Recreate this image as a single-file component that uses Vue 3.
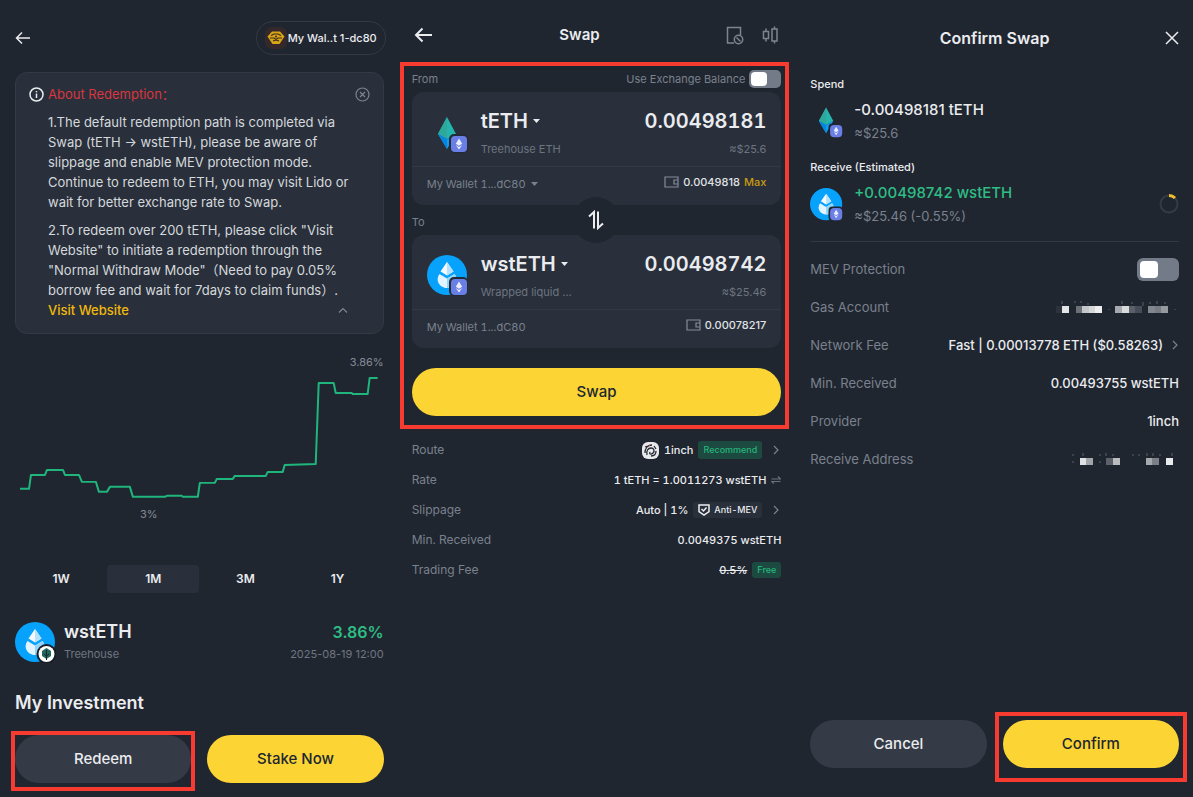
<script setup>
import { ref } from 'vue'

const ranges = ['1W', '1M', '3M', '1Y']
const range = ref('1M')
const amount = ref('0.00498181')
const useExchange = ref(false)
const mev = ref(false)

const trend =
  '5,137 14,137 16,123 30,123 32,118 48,118 50,123 64,123 67,130 81,130 84,140 92,140 95,135 115,135 118,145 150,145 152,144 167,144 168,145 183,145 185,131 200,131 202,127 218,127 220,124 251,124 253,120 268,120 270,113 301,112 304,31 319,31 321,41 337,41 338,42 353,42 355,26 363,26'

const gasMask = [
  [1, '#2c323c'], [7, '#e4e5e7'], [21, '#6c7178'], [27, '#c4c6c9'], [34, '#d6d7d9'], [40, '#eeeeef'],
  [60, '#a6a9ae'], [67, '#d9dadc'], [74, '#5a5f68'], [80, '#474d57'], [93, '#82868d'], [100, '#777c84'], [106, '#969a9f'],
]
const addressMask = [
  [25, '#e0e1e3'], [31, '#a1a4a9'], [51, '#5c616a'], [58, '#babcc0'], [91, '#a6a9ae'], [97, '#7b7f87'], [111, '#e9eaeb'],
]
</script>

<template>
  <main class="screens">
    <section class="screen detail">
      <header class="bar">
        <button class="icon-btn" aria-label="Back">
          <svg width="16" height="14" viewBox="0 0 16 14"><path d="M15 7H1.500M7 1.500L1.500 7L7 12.500" class="stroke" /></svg>
        </button>
        <button class="wallet">
          <svg width="22" height="22" viewBox="0 0 22 22">
            <rect width="22" height="22" rx="7" fill="#35282b" />
            <path d="M7 4.500h8l4.500 5-5 7.500H7.500l-5-7.500z" fill="#d9a514" />
            <path d="M6 8.500l3-1.500h4l3 1.500M5 11h4l2 1.500L13 11h4M8 14l3-1 3 1" fill="none" stroke="#3c2b20" stroke-width="1.200" />
            <circle cx="11" cy="9.500" r="1" fill="#3c2b20" />
          </svg>
          My Wal..t 1-dc80
        </button>
      </header>

      <article class="notice">
        <svg class="info" width="15" height="15" viewBox="0 0 15 15"><circle cx="7.500" cy="7.500" r="6.500" class="stroke" /><path d="M7.500 6.500v4.500M7.500 4v1.300" class="stroke" /></svg>
        <h2>About Redemption：</h2>
        <button class="icon-btn muted" aria-label="Dismiss">
          <svg width="15" height="15" viewBox="0 0 15 15"><circle cx="7.500" cy="7.500" r="6.500" class="stroke thin" /><path d="M5 5l5 5M10 5l-5 5" class="stroke thin" /></svg>
        </button>
        <div class="notice-text">
          <p>1.The default redemption path is completed via<br />Swap (tETH → wstETH), please be aware of<br />slippage and enable MEV protection mode.<br />Continue to redeem to ETH, you may visit Lido or<br />wait for better exchange rate to Swap.</p>
          <p>2.To redeem over 200 tETH, please click "Visit<br />Website" to initiate a redemption through the<br />"Normal Withdraw Mode"（Need to pay 0.05%<br />borrow fee and wait for 7days to claim funds）.</p>
          <div class="notice-end">
            <a href="#">Visit Website</a>
            <button class="icon-btn muted" aria-label="Collapse">
              <svg width="10" height="6" viewBox="0 0 10 6"><path d="M1 5.500L5 1.500L9 5.500" class="stroke thin" /></svg>
            </button>
          </div>
        </div>
      </article>

      <svg class="chart" viewBox="0 0 369 180" role="img" aria-label="APR trend">
        <polyline :points="trend" fill="none" stroke="#1fb57c" stroke-width="2" stroke-linejoin="round" />
        <text x="369" y="14" text-anchor="end">3.86%</text>
        <text x="134" y="166" text-anchor="middle">3%</text>
      </svg>

      <nav class="tabs">
        <button v-for="r in ranges" :key="r" :class="{ active: r === range }" @click="range = r">{{ r }}</button>
      </nav>

      <div class="asset">
        <svg width="41" height="41" viewBox="0 0 41 41">
          <circle cx="20" cy="20" r="20" fill="#06a2fb" />
          <path d="M20 7l6.500 9.500-6.500 4-6.500-4z" fill="#f3faff" /><path d="M20 7l6.500 9.500-6.500 4z" fill="#b5e1fd" />
          <path d="M12.500 19l7.500 4.500 7.500-4.500c5 7-1 14-7.500 14s-12.500-7-7.500-14z" fill="#e2f4ff" />
          <path d="M20 23.500l7.500-4.500c5 7-1 14-7.500 14z" fill="#91d4fd" />
          <circle cx="31.500" cy="32" r="10" fill="#181d25" /><circle cx="31.500" cy="32" r="8" fill="#fff" />
          <path d="M31.500 26l4.500 3v5l-4.500 3-4.500-3v-5z" fill="#22665c" /><path d="M31.500 28v10M29 32l2.500 2 2.500-2" stroke="#152a30" fill="none" />
        </svg>
        <div class="asset-name"><strong>wstETH</strong><span>Treehouse</span></div>
        <div class="asset-rate"><strong>3.86%</strong><span>2025-08-19 12:00</span></div>
      </div>

      <h2 class="title">My Investment</h2>
      <div class="actions">
        <div class="marked tight"><button class="pill grey">Redeem</button></div>
        <button class="pill">Stake Now</button>
      </div>
    </section>

    <section class="screen swap">
      <header class="bar">
        <button class="icon-btn" aria-label="Back">
          <svg width="19" height="16" viewBox="0 0 19 16"><path d="M18 8H2M8.500 1.500L2 8L8.500 14.500" class="stroke bold" /></svg>
        </button>
        <h1>Swap</h1>
        <div class="tools">
          <button class="icon-btn muted" aria-label="Orders">
            <svg width="18" height="19" viewBox="0 0 18 19"><path d="M8 17H1.500V1.500H14.500V9" class="stroke" /><circle cx="12.500" cy="13.500" r="4.200" class="stroke" /><path d="M10.500 11.500l4 4" class="stroke" /></svg>
          </button>
          <button class="icon-btn muted" aria-label="Chart">
            <svg width="17" height="18" viewBox="0 0 17 18"><path d="M4 2.500v3M4 12.500v3M1.500 5.500h5v7h-5zM12.500 0.500v2.500M12.500 15v2.500M10 3h5v12H10z" class="stroke" /></svg>
          </button>
        </div>
      </header>

      <div class="frame">
        <div class="line">
          <label for="from">From</label>
          <label class="exchange">Use Exchange Balance <input v-model="useExchange" type="checkbox" class="switch" /></label>
        </div>
        <div class="token-card">
          <div class="token-main">
            <svg class="coin" width="41" height="41" viewBox="0 0 41 41">
              <path d="M20 5l9 17-9 5-9-5z" fill="#26b5ae" /><path d="M20 5v22l-9-5z" fill="#2fa89c" />
              <path d="M11 22l9 5 9-5-9 15z" fill="#0e9cf0" /><path d="M11 22l9 5v10z" fill="#0784dc" />
              <rect x="22" y="22" width="19" height="19" rx="5" fill="#242b35" /><rect x="24" y="24" width="16" height="16" rx="4" fill="#6a7fe5" />
              <path d="M32 26.500l3.200 5.300-3.200 2-3.200-2zM28.800 33l3.200 2 3.200-2-3.200 4.500z" fill="#e9edff" />
            </svg>
            <div class="token-name">
              <button>tETH <svg width="9" height="6" viewBox="0 0 9 6"><path d="M1 1h7L4.500 5z" /></svg></button>
              <span>Treehouse ETH</span>
            </div>
            <div class="token-value">
              <input id="from" v-model="amount" type="text" inputmode="decimal" />
              <span>≈$25.6</span>
            </div>
          </div>
          <div class="token-foot">
            <button class="account">My Wallet 1...dC80 <svg width="9" height="6" viewBox="0 0 9 6"><path d="M1 1h7L4.500 5z" /></svg></button>
            <div class="balance">
              <svg width="15" height="12" viewBox="0 0 15 12"><path d="M1 1h13v10H1zM14 4h-4v4h4" class="stroke thin" /></svg>
              <span>0.0049818</span><button class="max">Max</button>
            </div>
          </div>
        </div>

        <div class="between">
          <span>To</span>
          <button class="flip" aria-label="Switch tokens">
            <svg width="18" height="20" viewBox="0 0 18 20"><path d="M2 6.500L7 2V18.500M11 1.500V18L16 13.500" class="stroke bold" /></svg>
          </button>
        </div>

        <div class="token-card">
          <div class="token-main">
            <svg class="coin" width="41" height="41" viewBox="0 0 41 41">
              <circle cx="20" cy="20" r="20" fill="#06a2fb" />
              <path d="M20 7l6.500 9.500-6.500 4-6.500-4z" fill="#f3faff" /><path d="M20 7l6.500 9.500-6.500 4z" fill="#b5e1fd" />
              <path d="M12.500 19l7.500 4.500 7.500-4.500c5 7-1 14-7.500 14s-12.500-7-7.500-14z" fill="#e2f4ff" />
              <path d="M20 23.500l7.500-4.500c5 7-1 14-7.500 14z" fill="#91d4fd" />
              <rect x="22" y="22" width="19" height="19" rx="5" fill="#242b35" /><rect x="24" y="24" width="16" height="16" rx="4" fill="#6a7fe5" />
              <path d="M32 26.500l3.200 5.300-3.200 2-3.200-2zM28.800 33l3.200 2 3.200-2-3.200 4.500z" fill="#e9edff" />
            </svg>
            <div class="token-name">
              <button>wstETH <svg width="9" height="6" viewBox="0 0 9 6"><path d="M1 1h7L4.500 5z" /></svg></button>
              <span>Wrapped liquid ...</span>
            </div>
            <div class="token-value"><output>0.00498742</output><span>≈$25.46</span></div>
          </div>
          <div class="token-foot">
            <span class="account">My Wallet 1...dC80</span>
            <div class="balance">
              <svg width="15" height="12" viewBox="0 0 15 12"><path d="M1 1h13v10H1zM14 4h-4v4h4" class="stroke thin" /></svg>
              <span>0.00078217</span>
            </div>
          </div>
        </div>
        <button class="pill">Swap</button>
      </div>

      <dl class="facts">
        <div>
          <dt>Route</dt>
          <dd>
            <svg width="17" height="17" viewBox="0 0 17 17">
              <rect width="17" height="17" rx="6" fill="#e8e9ea" />
              <path d="M3 11c0-5 3-8 7-8M5 13c-1-4 1-7 4-7s4 3 2 5-4 1-3-1M9 14c3 0 5-2 5-5M12 4l2 3M3 5l3-1" fill="none" stroke="#222934" stroke-width="1.300" />
              <path d="M6 5l2-2" stroke="#c53b45" />
            </svg>
            1inch <span class="tag green wide">Recommend</span>
            <svg class="chev" width="6" height="10" viewBox="0 0 6 10"><path d="M1 1L5 5L1 9" class="stroke thin" /></svg>
          </dd>
        </div>
        <div>
          <dt>Rate</dt>
          <dd>1 tETH = 1.0011273 wstETH <svg width="10" height="8" viewBox="0 0 10 8"><path d="M0.500 3H9.500L7 0.500M9.500 5.500H0.500L3 7.500" class="stroke thin dim" /></svg></dd>
        </div>
        <div>
          <dt>Slippage</dt>
          <dd>
            Auto | 1%
            <span class="tag">
              <svg width="12" height="12" viewBox="0 0 12 12"><path d="M1 1h10v6.500L6 11L1 7.500zM3.500 5L5.500 7L8.500 3.500" class="stroke" /></svg>
              Anti-MEV
            </span>
            <svg class="chev" width="6" height="10" viewBox="0 0 6 10"><path d="M1 1L5 5L1 9" class="stroke thin" /></svg>
          </dd>
        </div>
        <div><dt>Min. Received</dt><dd>0.0049375 wstETH</dd></div>
        <div><dt>Trading Fee</dt><dd><s>0.5%</s> <span class="tag green">Free</span></dd></div>
      </dl>
    </section>

    <section class="screen confirm">
      <header class="bar">
        <h1>Confirm Swap</h1>
        <button class="icon-btn" aria-label="Close">
          <svg width="14" height="14" viewBox="0 0 14 14"><path d="M1 1L13 13M13 1L1 13" class="stroke" /></svg>
        </button>
      </header>

      <h3>Spend</h3>
      <div class="leg">
        <svg width="33" height="33" viewBox="0 0 41 41">
          <path d="M20 3l9 17-9 5-9-5z" fill="#26b5ae" /><path d="M20 3v22l-9-5z" fill="#2fa89c" />
          <path d="M11 20l9 5 9-5-9 15z" fill="#0e9cf0" /><path d="M11 20l9 5v10z" fill="#0784dc" />
          <rect x="23" y="23" width="18" height="18" rx="5" fill="#202630" /><rect x="25" y="25" width="15" height="15" rx="5" fill="#6a7fe5" />
          <path d="M32.500 27l3 5-3 2-3-2zM29.500 33l3 2 3-2-3 4.500z" fill="#e9edff" />
        </svg>
        <div><strong>-0.00498181 tETH</strong><span>≈$25.6</span></div>
      </div>
      <h3>Receive (Estimated)</h3>
      <div class="leg">
        <svg width="33" height="33" viewBox="0 0 41 41">
          <circle cx="20" cy="20" r="20" fill="#06a2fb" />
          <path d="M20 7l6.500 9.500-6.500 4-6.500-4z" fill="#f3faff" /><path d="M20 7l6.500 9.500-6.500 4z" fill="#b5e1fd" />
          <path d="M12.500 19l7.500 4.500 7.500-4.500c5 7-1 14-7.500 14s-12.500-7-7.500-14z" fill="#e2f4ff" />
          <path d="M20 23.500l7.500-4.500c5 7-1 14-7.500 14z" fill="#91d4fd" />
          <rect x="23" y="23" width="18" height="18" rx="5" fill="#202630" /><rect x="25" y="25" width="15" height="15" rx="5" fill="#6a7fe5" />
          <path d="M32.500 27l3 5-3 2-3-2zM29.500 33l3 2 3-2-3 4.500z" fill="#e9edff" />
        </svg>
        <div><strong class="gain">+0.00498742 wstETH</strong><span>≈$25.46 (-0.55%)</span></div>
        <svg class="timer" width="20" height="20" viewBox="0 0 20 20"><circle cx="10" cy="10" r="8.500" fill="none" stroke="#343b46" stroke-width="2" /><path d="M10 1.500A8.500 8.500 0 0 1 16 4" fill="none" stroke="#f0c02c" stroke-width="3" /></svg>
      </div>

      <dl class="summary">
        <div><dt><label for="mev">MEV Protection</label></dt><dd><input id="mev" v-model="mev" type="checkbox" class="switch big" /></dd></div>
        <div>
          <dt>Gas Account</dt>
          <dd>
            <svg width="124" height="14" viewBox="0 0 124 14">
              <rect v-for="[x, c] in gasMask" :key="x" :x="x" y="6" width="7" height="7" :fill="c" />
              <path d="M7 1v3M20 1v2M26 1v2M33 3v2M67 1v3M77 2v2M88 2v4M95 2v2M102 1v3M110 2v2M54 9v1M120 9v1" stroke="#59606a" />
            </svg>
          </dd>
        </div>
        <div><dt>Network Fee</dt><dd>Fast | 0.00013778 ETH ($0.58263) <svg class="chev" width="6" height="10" viewBox="0 0 6 10"><path d="M1 1L5 5L1 9" class="stroke thin" /></svg></dd></div>
        <div><dt>Min. Received</dt><dd>0.00493755 wstETH</dd></div>
        <div><dt>Provider</dt><dd>1inch</dd></div>
        <div>
          <dt>Receive Address</dt>
          <dd>
            <svg width="124" height="14" viewBox="0 0 124 14">
              <rect v-for="[x, c] in addressMask" :key="x" :x="x" y="6" width="7" height="7" :fill="c" />
              <path d="M18 2v2M18 9v2M28 1v3M45 2v2M45 9v2M51 1v3M58 2v2M78 2v2M84 2v2M92 1v3M98 1v3M105 2v2M117 1v3" stroke="#59606a" />
            </svg>
          </dd>
        </div>
      </dl>

      <div class="actions">
        <button class="pill grey">Cancel</button>
        <div class="marked loose"><button class="pill">Confirm</button></div>
      </div>
    </section>
  </main>
</template>

<style>
body {
  margin: 0;
  background: #202630;
}
</style>

<style scoped>
.screens {
  display: grid;
  grid-template-columns: repeat(3, minmax(0, 1fr));
  min-height: 100vh;
  background: #202630;
  color: #eaecef;
  font-family: Inter, "Noto Sans CJK SC", sans-serif;
  font-size: 12px;
  line-height: 16px;
}
.screens * { box-sizing: border-box; }
.screen { display: flex; flex-direction: column; min-width: 0; }
button, input {
  margin: 0;
  padding: 0;
  border: 0;
  background: none;
  color: inherit;
  font: inherit;
}
h1, h2, h3, p, dl, dd { margin: 0; }
svg { flex: none; display: block; }
.stroke { fill: none; stroke: currentColor; stroke-width: 1.500; }
.bold { stroke-width: 2; }
.thin { stroke-width: 1.200; }
.dim { stroke: #6a727e; }
.icon-btn { display: flex; }
.muted { color: #7d8490; }
.bar { display: flex; align-items: center; justify-content: space-between; }
.pill {
  width: 100%;
  height: 48px;
  border-radius: 24px;
  background: #fcd535;
  color: #202630;
  font-size: 15px;
  font-weight: 500;
}
.grey { background: #353b46; color: #eaecef; }
.actions { display: grid; grid-template-columns: 1fr 1fr; gap: 16px; }
.marked { position: relative; }
.marked::after { content: ""; position: absolute; border: 4px solid #f83b30; pointer-events: none; }
.tight::after { inset: -4px -4px -8px; }
.loose::after { inset: -8px -8px -14px; }

.detail { padding: 21px 14px 14px 15px; }
.detail .bar { margin-right: -2px; }
.wallet {
  display: flex;
  align-items: center;
  gap: 1px;
  height: 34px;
  padding: 0 8px;
  border: 1px solid #333943;
  border-radius: 17px;
  font-size: 11px;
  font-weight: 500;
}
.notice {
  display: grid;
  grid-template-columns: 19px 1fr auto;
  align-items: center;
  margin-top: 17px;
  padding: 11px 13px 13px;
  border: 1px solid #333a45;
  border-radius: 12px;
  background: #29303b;
}
.notice h2 { color: #d9363f; font-size: 13px; font-weight: 400; line-height: 20px; }
.notice-text { grid-column: 2 / 4; margin-top: 8px; color: #d5d8dc; font-size: 13px; line-height: 20px; white-space: nowrap; }
.notice-text p { margin-bottom: 8px; }
.notice-text p + p { margin-bottom: 0; }
.notice-end { display: flex; align-items: center; justify-content: space-between; padding-right: 22px; }
.notice-end a { color: #f0b90b; font-size: 13px; font-weight: 500; text-decoration: none; }
.chart { width: 100%; margin-top: 18px; }
.chart text { fill: #858c97; font-size: 11px; }
.tabs { display: grid; grid-template-columns: repeat(4, 1fr); margin-top: 33px; }
.tabs button { height: 28px; border-radius: 4px; font-weight: 600; }
.tabs .active { background: #29303b; }
.asset { display: flex; align-items: center; gap: 8px; margin-top: 29px; }
.asset div { display: flex; flex-direction: column; gap: 4px; }
.asset strong { font-size: 18px; font-weight: 600; line-height: 20px; }
.asset span { color: #6f7682; font-size: 11px; }
.asset .asset-rate { margin-left: auto; text-align: right; }
.asset .asset-rate strong { color: #2ebd85; font-size: 16px; }
.title { margin-top: 28px; font-size: 18px; font-weight: 600; line-height: 24px; }
.detail .actions { margin-top: auto; }

.swap { padding: 21px 6px 14px 2px; }
.swap .bar { height: 28px; padding: 0 10px 0 14px; }
h1 { font-size: 15px; font-weight: 600; line-height: 20px; }
.swap .bar > .icon-btn, .tools { flex: 1; }
.swap h1 { padding-right: 34px; }
.tools { display: flex; justify-content: flex-end; gap: 18px; }
.frame { display: flex; flex-direction: column; margin-top: 13px; padding: 3px 4px 9px 8px; border: 4px solid #f83b30; }
.line { display: flex; align-items: center; justify-content: space-between; height: 20px; margin-bottom: 3px; color: #7a818d; font-size: 11px; }
.exchange { display: flex; align-items: center; gap: 4px; }
.switch { appearance: none; width: 32px; height: 18px; border-radius: 5px; background: #737b89; }
.switch::before { content: ""; display: block; width: 16px; height: 14px; margin: 2px; border-radius: 4px; background: #fff; }
.switch:checked::before { margin-left: auto; }
.big { width: 42px; height: 23px; border-radius: 6px; }
.big::before { width: 18px; height: 17px; margin: 3px; }
.token-card { border-radius: 12px; background: #29303b; }
.token-main { display: flex; gap: 13px; height: 74px; padding: 15px 15px 0; }
.coin { margin-top: 5px; }
.token-name, .token-value { display: flex; flex-direction: column; gap: 6px; }
.token-name button { display: flex; align-items: center; gap: 4px; font-size: 20px; font-weight: 600; line-height: 28px; }
.token-name svg, .account svg { fill: currentColor; }
.token-name span, .token-value span { color: #6d7480; font-size: 11px; }
.token-value { flex: 1; min-width: 0; align-items: flex-end; }
.token-value input, .token-value output { width: 100%; height: 28px; font-size: 20px; font-weight: 600; line-height: 28px; text-align: right; font-variant-numeric: tabular-nums; }
.token-foot { display: flex; align-items: center; justify-content: space-between; height: 39px; padding: 0 15px 4px; border-top: 1px solid #323944; }
.account { display: flex; align-items: center; gap: 4px; color: #7a818d; font-size: 11px; font-variant-numeric: tabular-nums; }
.balance { display: flex; align-items: center; gap: 4px; padding-bottom: 4px; color: #858c97; font-size: 11px; font-weight: 500; }
.balance span { color: #e0e2e6; }
.max { color: #c99a10; }
.between { position: relative; display: flex; align-items: center; height: 30px; padding-top: 4px; color: #7a818d; font-size: 11px; }
.flip {
  position: absolute;
  top: 50%;
  left: 50%;
  display: grid;
  place-items: center;
  width: 46px;
  height: 46px;
  margin: -23px;
  border-radius: 50%;
  background: #202630;
  color: #eaecef;
}
.frame > .pill { margin-top: 20px; }
.facts { margin-top: 6px; padding: 0 8px 0 12px; font-size: 11px; font-variant-numeric: tabular-nums; }
.facts > div, .summary > div { display: flex; align-items: center; justify-content: space-between; height: 30px; }
dt { color: #7a818d; }
dd { display: flex; align-items: center; gap: 5px; font-weight: 500; white-space: nowrap; }
.facts dt { font-size: 12px; }
.tag { display: flex; align-items: center; gap: 4px; height: 16px; padding: 0 5px; border-radius: 3px; background: #29303b; font-size: 9px; }
.green { background: #1d4a40; color: #25b47c; }
.wide { height: 18px; }
.chev { margin: 0 2px 0 6px; color: #7a818d; }

.confirm { padding: 28px 14px 29px 15px; }
.confirm .bar h1 { flex: 1; padding-left: 14px; font-size: 16px; text-align: center; }
.confirm .bar + h3 { margin-top: 28px; }
h3 { margin-top: 16px; font-size: 11px; font-weight: 500; line-height: 16px; }
.leg { display: flex; align-items: center; gap: 11px; height: 44px; margin-top: 7px; }
.leg div { display: flex; flex-direction: column; gap: 4px; }
.leg strong { font-size: 15px; font-weight: 500; line-height: 20px; }
.leg span { color: #7a818d; font-size: 13px; line-height: 18px; }
.leg .gain { color: #2ebd85; }
.timer { margin-left: auto; }
.summary { margin-top: 15px; padding-top: 8px; border-top: 1px solid #323944; font-size: 13px; }
.summary > div { height: 38px; }
.summary .chev { margin: 0 1px 0 4px; }
.confirm .actions { margin-top: auto; }
</style>
